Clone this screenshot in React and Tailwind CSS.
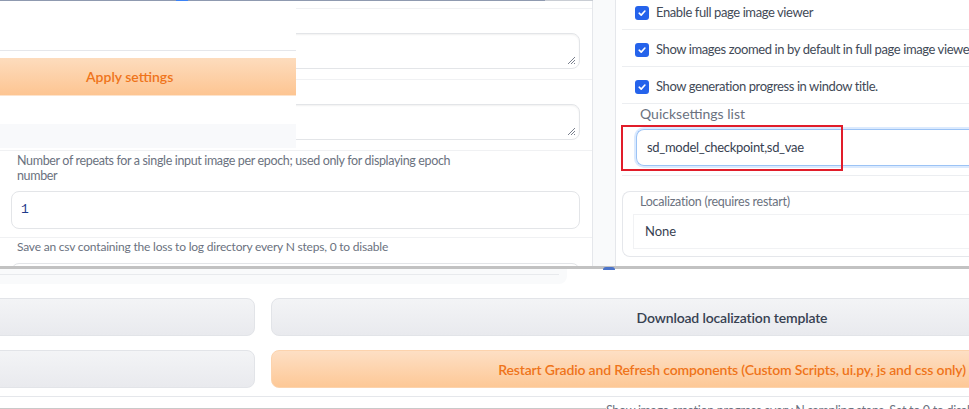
import React from 'react';

const Check = () => (
  <span className="flex items-center justify-center w-[14px] h-[14px] rounded-[3px] bg-[#2563eb] shrink-0">
    <svg width="10" height="10" viewBox="0 0 10 10" fill="none">
      <path d="M2.2 5.2 L4.2 7.1 L7.9 3" stroke="white" strokeWidth="1.6" strokeLinecap="round" strokeLinejoin="round" />
    </svg>
  </span>
);

const Grip = () => (
  <svg className="absolute right-[3px] bottom-[3px]" width="9" height="9" viewBox="0 0 9 9">
    <path d="M8 1 L1 8 M8 4 L4 8 M8 7 L7 8" stroke="#6b7280" strokeWidth="0.9" />
  </svg>
);

const TextArea = () => (
  <div className="relative h-[36px] rounded-[8px] border border-[#e3e5e8] bg-white shadow-[inset_0_1px_2px_rgba(0,0,0,0.06)]">
    <Grip />
  </div>
);

const LeftPanel = () => (
  <div className="w-[593px] border-r border-[#e5e7eb] pt-[8px] text-[#6b7280]">
    <div className="border-t border-[#f0f1f3] pt-[24px] pb-[10px] px-[11px] pr-[12px]">
      <TextArea />
    </div>
    <div className="border-t border-[#f0f1f3] pt-[24px] pb-[10px] px-[11px] pr-[12px]">
      <TextArea />
    </div>
    <div className="border-t border-[#f0f1f3] pt-[2px] pb-[8px] px-[11px] pr-[12px]">
      <p className="pl-[6px] leading-[15px] text-[12.5px] tracking-[-0.35px]">
        Number of repeats for a single input image per epoch; used only for displaying epoch
        <br />
        number
      </p>
      <div className="mt-[8px] h-[38px] flex items-center px-[9px] rounded-[8px] border border-[#e3e5e8] bg-white font-['Liberation_Mono',monospace] text-[13px] text-[#1e3a8a]">
        1
      </div>
    </div>
    <div className="border-t border-[#f0f1f3] pt-[1px] px-[11px] pr-[12px]">
      <p className="pl-[6px] leading-[15px] text-[12px] tracking-[-0.2px]">
        Save an csv containing the loss to log directory every N steps, 0 to disable
      </p>
      <div className="mt-[9px] h-[38px] rounded-[8px] border border-[#e3e5e8] bg-white" />
    </div>
  </div>
);

const rows = [
  'Enable full page image viewer',
  'Show images zoomed in by default in full page image viewer',
  'Show generation progress in window title.',
];

const RightPanel = () => (
  <div className="flex-1 border-l border-[#e5e7eb] bg-white min-w-0">
    <div className="-mt-[7px]">
      {rows.map((r) => (
        <div key={r} className="ml-[6px] h-[37px] pt-[3px] flex items-center gap-[7px] pl-[13px] border-b border-[#eceef1] text-[13px] tracking-[-0.4px] text-[#424a57] whitespace-nowrap">
          <Check />
          <span>{r}</span>
        </div>
      ))}
    </div>
    <div className="ml-[6px] pl-[12px] pt-[2px] pb-[9px] border-b border-[#eceef1]">
      <div className="pl-[6px] leading-[16px] text-[14px] text-[#6b7280]">Quicksettings list</div>
      <div className="mt-[7px] h-[37px] flex items-center pl-[10px] ml-[2px] rounded-l-[8px] border border-r-0 border-[#9cc3f5] shadow-[0_0_0_2px_#dbeafe] text-[13px] tracking-[-0.3px] text-[#374151] whitespace-nowrap">
        sd_model_checkpoint,sd_vae
      </div>
    </div>
    <div className="ml-[6px] mt-[15px] h-[66px] pl-[11px] pt-[2px] border border-r-0 border-[#e5e7eb] rounded-l-[8px]">
      <div className="pl-[6px] leading-[16px] text-[12.5px] tracking-[-0.25px] text-[#6b7280]">Localization (requires restart)</div>
      <div className="mt-[5px] h-[33px] flex items-center pl-[11px] bg-white shadow-[0_0_0_1px_#f1f2f4] text-[13px] text-[#374151]">
        None
      </div>
    </div>
  </div>
);

export default function App() {
  return (
    <div className="relative w-[969px] h-[409px] overflow-hidden bg-white font-['Lato','Noto_Sans',sans-serif]">
      {/* base screen */}
      <div className="flex h-[268px]">
        <LeftPanel />
        <div className="w-[22px] bg-[#f9fafb]" />
        <RightPanel />
      </div>

      {/* strip at the very top */}
      <div className="absolute top-0 left-0 w-[545px] h-px bg-[#8f9ab0]" />
      <div className="absolute top-0 left-[545px] w-[48px] h-px bg-[#c9cdd4]" />
      <div className="absolute top-0 left-[176px] w-[12px] h-[2px] bg-[#3b82f6]" />

      {/* Apply settings piece */}
      <div className="absolute left-0 top-[1px] w-[296px] h-[147px] bg-white overflow-hidden">
        <div className="h-[50px] border-b border-[#e5e7eb]" />
        <div className="mt-[7px] h-[38px] flex items-center pl-[86px] bg-gradient-to-b from-[#fddcbd] to-[#fdc592] border-b border-[#fde3cc] text-[14px] font-semibold text-[#ef741a]">
          Apply settings
        </div>
        <div className="mt-[28px] h-[30px] bg-[#f8f9fb]" />
      </div>

      {/* buttons piece */}
      <div className="absolute left-0 top-[266px] w-full h-[143px] bg-white border-t-[3px] border-[#c2c2c2]">
        <div className="w-[567px] h-[15px] bg-[#f9fafb] rounded-br-[8px] pt-[5px]">
          <div className="border-t border-[#e8eaed] mr-[8px]" />
        </div>
        <div className="mt-[14px] flex flex-col gap-[14px]">
          <div className="flex gap-[16px] -ml-[12px]">
            <div className="w-[267px] h-[38px] shrink-0 rounded-[8px] border border-[#e2e4e8] bg-gradient-to-b from-[#f3f4f6] to-[#e9eaee]" />
            <div className="w-[922px] h-[38px] shrink-0 flex items-center justify-center rounded-[8px] border border-[#e2e4e8] bg-gradient-to-b from-[#f3f4f6] to-[#e9eaee] text-[14px] tracking-[-0.15px] font-semibold text-[#374151]">
              Download localization template
            </div>
          </div>
          <div className="flex gap-[16px] -ml-[12px]">
            <div className="w-[267px] h-[38px] shrink-0 rounded-[8px] border border-[#e2e4e8] bg-gradient-to-b from-[#f3f4f6] to-[#e9eaee]" />
            <div className="w-[922px] h-[38px] shrink-0 flex items-center justify-center rounded-[8px] border border-[#fcd3ad] bg-gradient-to-b from-[#fddfc4] to-[#fdc896] text-[14px] tracking-[-0.17px] font-semibold text-[#ef741a] whitespace-nowrap">
              Restart Gradio and Refresh components (Custom Scripts, ui.py, js and css only)
            </div>
          </div>
        </div>
        <div className="mt-[8px] border-t border-[#e5e7eb]" />
        <div className="mt-[11px] border-t border-[#c9c9c9]" />
      </div>
      <div className="absolute left-[606px] top-[404px] h-[5px] w-[363px] overflow-hidden bg-white">
        <div className="-mt-[1px] text-[12.5px] tracking-[-0.3px] leading-[16px] text-[#6b7280] whitespace-nowrap">
          Show image creation progress every N sampling steps. Set to 0 to disable. Set to -1 to show after completion
        </div>
      </div>

      {/* tiny blue piece peeking out */}
      <div className="absolute left-[603px] top-[267px] w-[12px] h-[3px] rounded-t-[3px] bg-[#4b73c9]" />

      {/* highlight */}
      <div className="absolute left-[621px] top-[125px] w-[222px] h-[46px] border-2 border-[#e11d2a]" />
    </div>
  );
}
